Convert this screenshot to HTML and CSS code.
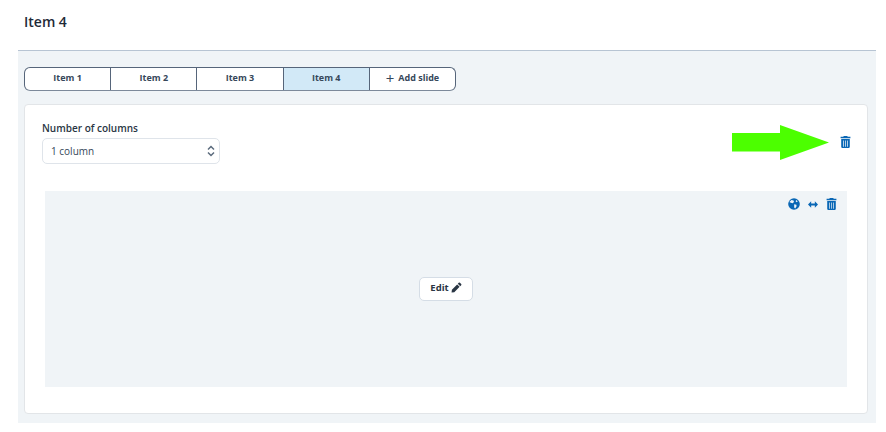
FILE: index.html
```html
<!DOCTYPE html>
<html lang="en">
<head>
<meta charset="utf-8">
<title>Item 4</title>
<link rel="stylesheet" href="styles.css">
</head>
<body>
<main class="page">
  <h1 class="title">Item 4</h1>
  <section class="panel">
    <div class="tabs">
      <button class="tab">Item 1</button>
      <button class="tab">Item 2</button>
      <button class="tab">Item 3</button>
      <button class="tab tab-active">Item 4</button>
      <button class="tab"><span class="plus">+</span><span>Add slide</span></button>
    </div>
    <div class="card">
      <div class="card-top">
        <div class="field">
          <label class="label">Number of columns</label>
          <div class="select">
            <span>1 column</span>
            <svg class="updown" viewBox="0 0 8 12" width="8" height="12"><path d="M1 4.500 4 1.500 7 4.500M1 7.500 4 10.500 7 7.500" fill="none" stroke="#5b6b7d" stroke-width="1.500"/></svg>
          </div>
        </div>
        <svg class="icon trash-main" viewBox="0 0 12 14" width="11" height="12"><use href="#trash"/></svg>
      </div>
      <div class="column">
        <div class="column-tools">
          <svg class="icon" viewBox="0 0 14 14" width="12" height="12"><circle cx="7" cy="7" r="6.800" fill="#0a67b5"/><path d="M4 2.200 6.500 3 7 4.800 5.400 6 3.400 5.600 1.600 4.600ZM7.200 7.200 9.800 7.800 10 9.600 8.400 12.200 7.200 11ZM9.400 2.400 11.400 3.800 10.200 5 9 4Z" fill="#eff3f7"/></svg>
          <svg class="icon" viewBox="0 0 12 8" width="10" height="7"><path d="M0 4 3.800 0V2.800H8.200V0L12 4 8.200 8V5.200H3.800V8Z" fill="#0a67b5"/></svg>
          <svg class="icon" viewBox="0 0 12 14" width="11" height="12"><use href="#trash"/></svg>
        </div>
        <button class="edit">Edit
          <svg viewBox="0 0 12 12" width="11" height="11"><path d="M8.400.9a1 1 0 0 1 1.400 0l1.300 1.300a1 1 0 0 1 0 1.400l-1 1L7.400 1.900ZM6.700 2.600 9.400 5.300 3.600 11.100.6 11.500 1 8.400Z" fill="#2a3644"/></svg>
        </button>
      </div>
    </div>
  </section>
</main>
<svg class="arrow" viewBox="0 0 97 35" width="97" height="35"><path d="M0 8H48V0L97 17.500 48 35V26.500H0Z" fill="#4cff00"/></svg>
<svg class="defs" width="0" height="0"><defs><symbol id="trash" viewBox="0 0 12 14"><path d="M4 0H8L8.600 1H12V2.600H0V1H3.400ZM1 3.400H11V12.500A1.500 1.500 0 0 1 9.500 14H2.500A1.500 1.500 0 0 1 1 12.500ZM3.200 5.200V12.400H4V5.200ZM5.600 5.200V12.400H6.400V5.200ZM8 5.200V12.400H8.800V5.200Z" fill="#0a67b5" fill-rule="evenodd"/></symbol></defs></svg>
</body>
</html>
```
FILE: styles.css
```css
* { box-sizing: border-box; }
html, body { margin: 0; padding: 0; background: #fff; }
body { position: relative; width: 886px; height: 432px; overflow: hidden; font-family: "Open Sans", "Noto Sans", sans-serif; color: #1f2a37; }
.page { padding: 0 10px 0 18px; }
.title { margin: 0; height: 50px; padding: 12px 0 0 6px; font-size: 14px; line-height: 20px; font-weight: 600; }
.panel { height: 373px; background: #f0f4f7; border-top: 1px solid #b7c4d3; padding: 16px 8px 0 6px; }
.tabs { display: flex; width: 432px; height: 24px; background: #fff; border: 1px solid #56657a; border-bottom-color: #7c899a; border-radius: 6px; overflow: hidden; }
.tab { flex: 1; display: flex; align-items: center; justify-content: center; gap: 4px; border: 0; border-right: 1px solid #56657a; background: transparent; padding: 0 0 2px; font: 700 9px/16px "Open Sans", sans-serif; color: #36475a; }
.tab:last-child { border-right: 0; }
.tab-active { background: #d2e9f7; }
.plus { font-size: 15px; font-weight: 400; line-height: 16px; color: #36475a; }
.card { margin-top: 13px; height: 310px; background: #fff; border: 1px solid #e2e5e8; border-radius: 4px; padding: 16px 20px 0 17px; }
.card-top { display: flex; justify-content: space-between; align-items: flex-start; }
.label { display: block; font-size: 10px; line-height: 14px; font-weight: 600; color: #2a3644; }
.select { display: flex; justify-content: space-between; align-items: center; width: 178px; height: 26px; margin-top: 3px; padding: 0 4px 0 8px; border: 1px solid #dfe4ea; border-radius: 5px; font-size: 10px; color: #36475a; }
.icon { display: block; }
.trash-main { margin-top: 15px; margin-right: -4px; }
.column { position: relative; display: flex; align-items: center; justify-content: center; height: 196px; margin: 27px 0 0 3px; background: #f0f4f7; }
.column-tools { position: absolute; top: 7px; right: 10px; display: flex; align-items: center; gap: 8px; }
.edit { display: flex; align-items: center; justify-content: center; gap: 2px; width: 54px; height: 24px; padding: 0 0 3px; background: #fff; border: 1px solid #d5dde6; border-radius: 5px; font: 700 9.500px "Open Sans", sans-serif; color: #2a3644; }
.arrow { position: absolute; left: 732px; top: 125px; }
.defs { position: absolute; }
```
